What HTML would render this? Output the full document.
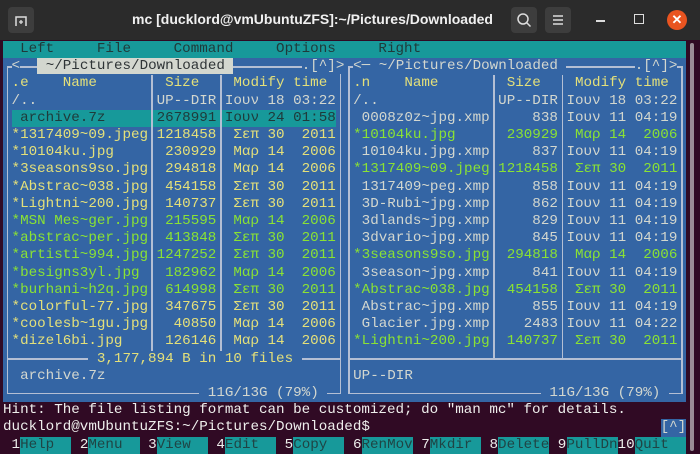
<!DOCTYPE html>
<html><head><meta charset="utf-8"><style>
*{margin:0;padding:0;box-sizing:border-box}
body{width:700px;height:454px;overflow:hidden;background:#300a24;position:relative;font-family:"Liberation Mono",monospace}
.tb{position:absolute;left:0;top:0;width:700px;height:40px;background:#2b2b2b}
.btn{position:absolute;top:7px;width:26px;height:26px;background:#3d3d3d;border-radius:4px}
.title{position:absolute;left:0;width:625px;top:11px;text-align:center;color:#f0f0f0;font:bold 14px "Liberation Sans",sans-serif}
.r{position:absolute;white-space:pre;font-size:14.23px;line-height:17.2px;height:17.2px;color:#d3d7cf}
.bl{position:absolute;background:#b4bfd4}
.Y{color:#e4e07a}.G{color:#8ae234}.W{color:#d3d7cf}
.fk{position:absolute;top:436.6px;height:17.2px;background:#17999a}
</style></head><body>
<div class="tb"></div>
<div class="btn" style="left:8px"><svg width="26" height="26"><path d="M8 19V10h10v9" fill="none" stroke="#ddd" stroke-width="1.5"/><path d="M11 15h4M13 13v4" stroke="#ddd" stroke-width="1.3"/></svg></div>
<div class="title">mc [ducklord@vmUbuntuZFS]:~/Pictures/Downloaded</div>
<div class="btn" style="left:511px"><svg width="26" height="26"><circle cx="12" cy="12" r="5" fill="none" stroke="#ddd" stroke-width="1.5"/><path d="M15.5 15.5l4 4" stroke="#ddd" stroke-width="1.5"/></svg></div>
<div class="btn" style="left:545px"><svg width="26" height="26"><path d="M8 9h10M8 13h10M8 17h10" stroke="#ddd" stroke-width="1.5"/></svg></div>
<div style="position:absolute;left:596px;top:20px;width:9px;height:2px;background:#ddd"></div>
<div style="position:absolute;left:634px;top:14px;width:10px;height:10px;border:1.5px solid #ddd"></div>
<div style="position:absolute;left:667px;top:10px;width:20px;height:20px;border-radius:50%;background:#e95420;color:#fff;font:bold 13px 'Liberation Sans',sans-serif;text-align:center;line-height:20px">✕</div>

<div style="position:absolute;left:3px;top:41px;width:683px;height:17.2px;background:#17999a"></div>
<div class="r" style="left:3px;top:41px;color:#1f3a3a">  Left     File     Command     Options     Right</div>
<div style="position:absolute;left:3px;top:58.2px;width:683px;height:344px;background:#3465a4"></div>
<div style="position:absolute;left:11.5px;top:109.8px;width:324px;height:17.2px;background:#17999a"></div>

<div class="bl" style="left:6.5px;top:66px;width:1.6px;height:328px"></div>
<div class="bl" style="left:339.5px;top:66px;width:1.6px;height:328px"></div>
<div class="bl" style="left:6.5px;top:66px;width:334px;height:1.6px"></div>
<div class="bl" style="left:6.5px;top:392.8px;width:334px;height:1.6px"></div>
<div class="bl" style="left:6.5px;top:358.4px;width:334px;height:1.6px"></div>
<div class="bl" style="left:151.4px;top:75.4px;width:1.6px;height:283px"></div>
<div class="bl" style="left:220.2px;top:75.4px;width:1.6px;height:283px"></div>
<div class="bl" style="left:348.1px;top:66px;width:1.6px;height:328px"></div>
<div class="bl" style="left:681.1px;top:66px;width:1.6px;height:328px"></div>
<div class="bl" style="left:348.1px;top:66px;width:334px;height:1.6px"></div>
<div class="bl" style="left:348.1px;top:392.8px;width:334px;height:1.6px"></div>
<div class="bl" style="left:348.1px;top:358.4px;width:334px;height:1.6px"></div>
<div class="bl" style="left:493px;top:75.4px;width:1.6px;height:283px"></div>
<div class="bl" style="left:561.8px;top:75.4px;width:1.6px;height:283px"></div>

<div class="r" style="left:3px;top:58.2px"> <span style="background:#3465a4">&lt;</span>  <span style="background:#d3d7cf;color:#2e3436"> ~/Pictures/Downloaded </span>        <span style="background:#3465a4">.[^]&gt;</span></div>
<div class="r" style="left:344.6px;top:58.2px"> <span style="background:#3465a4">&lt;─ ~/Pictures/Downloaded </span>        <span style="background:#3465a4">.[^]&gt;</span></div>
<div class="r Y" style="left:3px;top:75.4px"> .e    Name        Size    Modify time</div>
<div class="r Y" style="left:344.6px;top:75.4px"> .n    Name        Size    Modify time</div>

<div class="r W" style="left:3px;top:92.6px"> /..              UP--DIR Ιουν 18 03:22</div>
<div class="r" style="left:3px;top:109.8px;color:#1f3a3a">  archive.7z      2678991 Ιουν 24 01:58</div>
<div class="r Y" style="left:3px;top:127px"> *1317409~09.jpeg 1218458  Σεπ 30  2011</div>
<div class="r Y" style="left:3px;top:144.2px"> *10104ku.jpg      230929  Μαρ 14  2006</div>
<div class="r Y" style="left:3px;top:161.4px"> *3seasons9so.jpg  294818  Μαρ 14  2006</div>
<div class="r Y" style="left:3px;top:178.6px"> *Abstrac~038.jpg  454158  Σεπ 30  2011</div>
<div class="r Y" style="left:3px;top:195.8px"> *Lightni~200.jpg  140737  Σεπ 30  2011</div>
<div class="r G" style="left:3px;top:213px"> *MSN Mes~ger.jpg  215595  Μαρ 14  2006</div>
<div class="r G" style="left:3px;top:230.2px"> *abstrac~per.jpg  413848  Σεπ 30  2011</div>
<div class="r G" style="left:3px;top:247.4px"> *artisti~994.jpg 1247252  Σεπ 30  2011</div>
<div class="r G" style="left:3px;top:264.6px"> *besigns3yl.jpg   182962  Μαρ 14  2006</div>
<div class="r G" style="left:3px;top:281.8px"> *burhani~h2q.jpg  614998  Σεπ 30  2011</div>
<div class="r Y" style="left:3px;top:299px"> *colorful-77.jpg  347675  Σεπ 30  2011</div>
<div class="r Y" style="left:3px;top:316.2px"> *coolesb~1gu.jpg   40850  Μαρ 14  2006</div>
<div class="r Y" style="left:3px;top:333.4px"> *dizel6bi.jpg     126146  Μαρ 14  2006</div>
<div class="r Y" style="left:3px;top:350.6px">          <span style="background:#3465a4"> 3,177,894 B in 10 files </span></div>
<div class="r W" style="left:3px;top:367.8px">  archive.7z</div>
<div class="r W" style="left:3px;top:385px">                       <span style="background:#3465a4"> 11G/13G (79%) </span></div>

<div class="r W" style="left:344.6px;top:92.6px"> /..              UP--DIR Ιουν 18 03:22</div>
<div class="r W" style="left:344.6px;top:109.8px">  0008z0z~jpg.xmp     838 Ιουν 11 04:19</div>
<div class="r G" style="left:344.6px;top:127px"> *10104ku.jpg      230929  Μαρ 14  2006</div>
<div class="r W" style="left:344.6px;top:144.2px">  10104ku.jpg.xmp     837 Ιουν 11 04:19</div>
<div class="r G" style="left:344.6px;top:161.4px"> *1317409~09.jpeg 1218458  Σεπ 30  2011</div>
<div class="r W" style="left:344.6px;top:178.6px">  1317409~peg.xmp     858 Ιουν 11 04:19</div>
<div class="r W" style="left:344.6px;top:195.8px">  3D-Rubi~jpg.xmp     862 Ιουν 11 04:19</div>
<div class="r W" style="left:344.6px;top:213px">  3dlands~jpg.xmp     829 Ιουν 11 04:19</div>
<div class="r W" style="left:344.6px;top:230.2px">  3dvario~jpg.xmp     845 Ιουν 11 04:19</div>
<div class="r G" style="left:344.6px;top:247.4px"> *3seasons9so.jpg  294818  Μαρ 14  2006</div>
<div class="r W" style="left:344.6px;top:264.6px">  3season~jpg.xmp     841 Ιουν 11 04:19</div>
<div class="r G" style="left:344.6px;top:281.8px"> *Abstrac~038.jpg  454158  Σεπ 30  2011</div>
<div class="r W" style="left:344.6px;top:299px">  Abstrac~jpg.xmp     855 Ιουν 11 04:19</div>
<div class="r W" style="left:344.6px;top:316.2px">  Glacier.jpg.xmp    2483 Ιουν 11 04:22</div>
<div class="r G" style="left:344.6px;top:333.4px"> *Lightni~200.jpg  140737  Σεπ 30  2011</div>
<div class="r W" style="left:344.6px;top:367.8px"> UP--DIR</div>
<div class="r W" style="left:344.6px;top:385px">                       <span style="background:#3465a4"> 11G/13G (79%) </span></div>

<div class="r" style="left:3px;top:402.2px;color:#eeeeec">Hint: The file listing format can be customized; do "man mc" for details.</div>
<div class="r" style="left:3px;top:419.4px;color:#eeeeec">ducklord@vmUbuntuZFS:~/Pictures/Downloaded$</div>
<div class="r" style="left:660.6px;top:419.4px;background:#3465a4;color:#d3d7cf">[^]</div>

<div class="fk" style="left:20.1px;width:51.2px"></div>
<div class="fk" style="left:88.4px;width:51.2px"></div>
<div class="fk" style="left:156.7px;width:51.2px"></div>
<div class="fk" style="left:225px;width:51.2px"></div>
<div class="fk" style="left:293.3px;width:51.2px"></div>
<div class="fk" style="left:361.6px;width:51.2px"></div>
<div class="fk" style="left:429.9px;width:51.2px"></div>
<div class="fk" style="left:498.2px;width:51.2px"></div>
<div class="fk" style="left:566.5px;width:51.2px"></div>
<div class="fk" style="left:634.8px;width:51.2px"></div>
<div class="r" style="left:3px;top:436.6px;color:#eeeeec"> 1<span style="color:#1f4545">Help  </span> 2<span style="color:#1f4545">Menu  </span> 3<span style="color:#1f4545">View  </span> 4<span style="color:#1f4545">Edit  </span> 5<span style="color:#1f4545">Copy  </span> 6<span style="color:#1f4545">RenMov</span> 7<span style="color:#1f4545">Mkdir </span> 8<span style="color:#1f4545">Delete</span> 9<span style="color:#1f4545">PullDn</span>10<span style="color:#1f4545">Quit  </span></div>

<div style="position:absolute;left:690px;top:43px;width:4px;height:408px;border-radius:2px;background:#9a8c96"></div>
</body></html>
